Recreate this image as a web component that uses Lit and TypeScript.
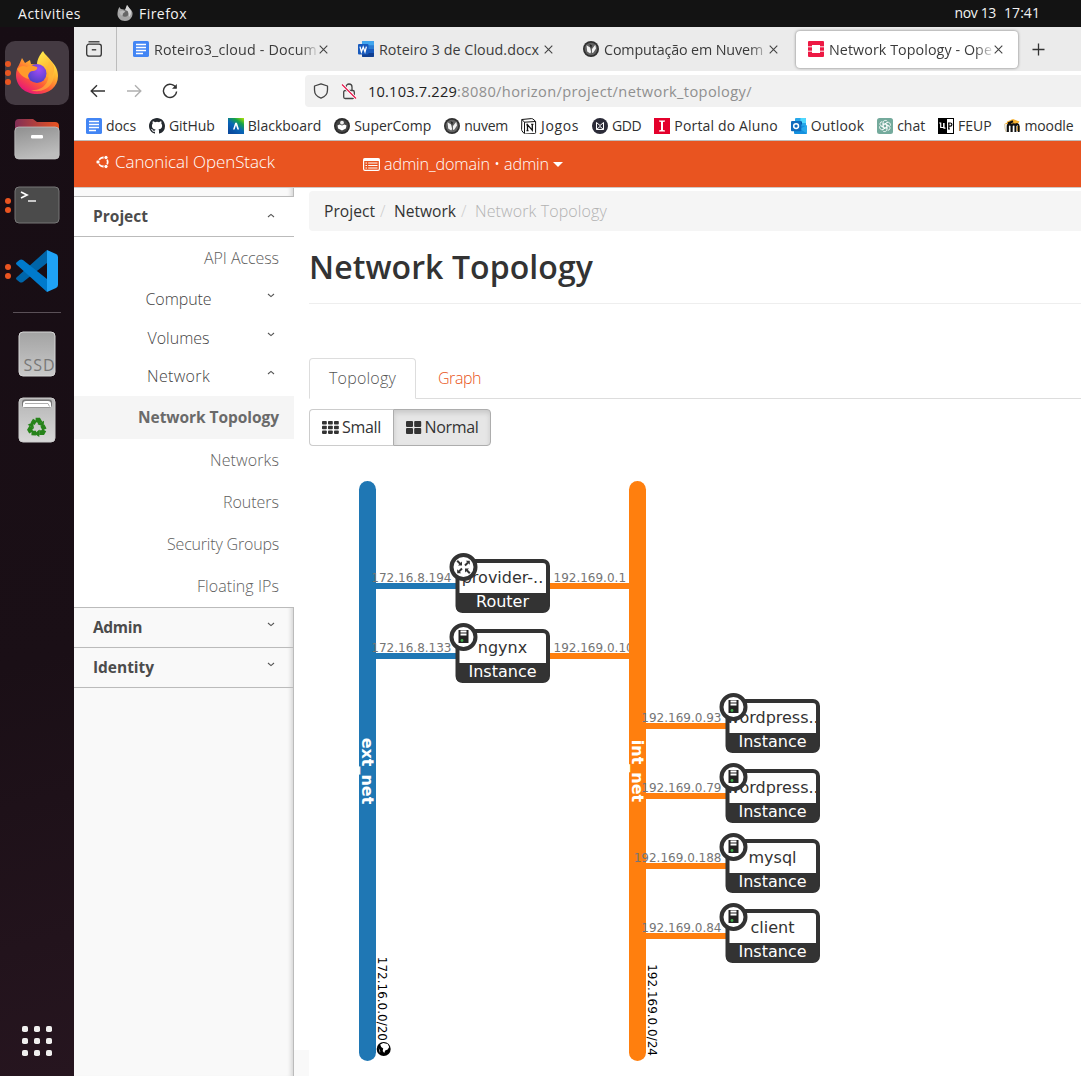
import { LitElement, html, svg, css, TemplateResult } from "lit";
import { customElement, property } from "lit/decorators.js";
import { classMap } from "lit/directives/class-map.js";

/** A single line of text whose tracking is adjusted so that it takes a given width. */
@customElement("fit-text")
class FitText extends LitElement {
  @property({ type: Number }) w = 0;
  @property() text = "";
  static styles = css`
    :host { display: inline-block; white-space: pre; flex: none; }
    .line { display: inline-block; white-space: pre; }
  `;
  render() {
    return html`<span class="line">${this.text}</span>`;
  }
  updated() {
    const line = this.renderRoot.querySelector(".line") as HTMLElement;
    line.style.letterSpacing = "0px";
    const natural = line.getBoundingClientRect().width;
    const n = Array.from(this.text).length;
    if (this.w && n) {
      line.style.letterSpacing = `${((this.w - natural) / n).toFixed(3)}px`;
      this.style.width = `${this.w}px`;
    }
  }
}

const t = (text: string, w: number, cls = "") => html`<fit-text class=${cls} .text=${text} .w=${w}></fit-text>`;

const ic = (body: TemplateResult, w = 16, h = 16, vb = `0 0 ${w} ${h}`) =>
  html`<svg class="ic" width=${w} height=${h} viewBox=${vb} fill="none">${body}</svg>`;

const ICONS: Record<string, TemplateResult> = {
  docs: svg`<rect width="16" height="16" rx="1.6" fill="#4285f4"/><path d="M3 4h10M3 7h10M3 10h10M3 13h7" stroke="#fff" stroke-width="1.5" transform="translate(0 -.5)"/>`,
  word: svg`<rect x="4" y="0" width="12" height="16" rx="1" fill="#2b7cd3"/><path d="M4 1a1 1 0 0 1 1-1h10a1 1 0 0 1 1 1v3.2H4z" fill="#41a5ee"/><path d="M4 8h12v4H4z" fill="#185abd"/><path d="M4 12h12v3a1 1 0 0 1-1 1H5a1 1 0 0 1-1-1z" fill="#103f91"/><rect y="3" width="10.5" height="10.5" rx="1" fill="#185abd"/><path d="M2 5.6l1.4 5.2L5.2 6l1.8 4.8L8.4 5.6" stroke="#fff" stroke-width="1.3"/>`,
  globe: svg`<circle cx="8" cy="8" r="8" fill="#303030"/><circle cx="8" cy="8" r="6.300" fill="#626262"/><path d="M3.500 4.200l3.600 2.300 1 4.500-.9 1.600-3-2zM9 8l3.300-4.300.7 3.800-2.600 4-1.400.6z" fill="#f2f2f2"/><path d="M6.500 3l2.500 1.500-1 3z" fill="#222"/>`,
  openstack: svg`<path d="M1 0h14a1 1 0 0 1 1 1v4h-4V4H4v1H0V1a1 1 0 0 1 1-1zM0 11h4v1h8v-1h4v4a1 1 0 0 1-1 1H1a1 1 0 0 1-1-1z" fill="#ed1944"/><path d="M0 6.300h4v3.400H0zM12 6.300h4v3.400h-4z" fill="#ed1944"/><path d="M0 5.600h4M12 5.600h4M0 10.400h4M12 10.400h4" stroke="#f7a3b3" stroke-width="1"/>`,
  github: svg`<path fill="#24292f" d="M8 0C3.580 0 0 3.580 0 8c0 3.540 2.290 6.530 5.470 7.590.4.070.55-.17.55-.38 0-.19-.01-.82-.01-1.490-2.010.37-2.530-.49-2.690-.94-.09-.23-.48-.94-.82-1.130-.28-.15-.68-.52-.01-.53.63-.01 1.080.58 1.230.82.72 1.210 1.870.87 2.330.66.07-.52.28-.87.51-1.070-1.780-.2-3.640-.89-3.640-3.950 0-.87.31-1.590.82-2.150-.08-.2-.36-1.020.08-2.120 0 0 .67-.21 2.200.82a7.600 7.600 0 0 1 4 0c1.530-1.040 2.200-.82 2.200-.82.44 1.100.16 1.920.08 2.120.51.56.82 1.270.82 2.150 0 3.070-1.870 3.750-3.650 3.950.29.25.54.73.54 1.480 0 1.070-.01 1.930-.01 2.200 0 .21.15.46.55.38A8.010 8.010 0 0 0 16 8c0-4.420-3.580-8-8-8z"/>`,
  blackboard: svg`<defs><linearGradient id="bb" x1="1" y1="0" x2=".3" y2="1"><stop stop-color="#b6e600"/><stop offset=".3" stop-color="#16a34a"/><stop offset=".6" stop-color="#0866b8"/><stop offset="1" stop-color="#0a4a9e"/></linearGradient></defs><rect width="16" height="16" fill="url(#bb)"/><path d="M5 11.500L7.200 4.800h1.700l2.200 6.700H9.400L8 7.300l-1.400 4.200z" fill="#fff"/>`,
  supercomp: svg`<circle cx="8" cy="8" r="8" fill="#2b2b2b"/><circle cx="8" cy="8" r="6.300" fill="#444"/><path d="M3.500 7.500l2-1 2.500 1 2.500-1 2 1-.6 3L8 12.500 4.100 10.500z" fill="#fff"/><circle cx="8" cy="4.700" r="1.900" fill="#eee"/>`,
  notion: svg`<path d="M.8 1.500l9.500-.9c.8 0 1.200.1 1.700.5l2 1.700c.5.4.6.5.6.9v10.800c0 .7-.2 1-1.100 1.100l-9 .4c-.7 0-1-.1-1.400-.5L1.100 13c-.3-.5-.5-.8-.5-1.300z" fill="#fff" stroke="#111" stroke-width="1"/><path d="M1 1.600l2.500 2.600 11-.7M3.500 4.200v11" stroke="#111" stroke-width="1"/><path d="M6.500 12.500V6.700l4.800 5.600V6.300M5.300 6.800h1.800M10.200 6.400h2.200M5.500 12.600h2" stroke="#111" stroke-width="1.300"/>`,
  gdd: svg`<circle cx="8" cy="8" r="8" fill="#2b2b38"/><path d="M4.500 4.500L8 7.500l3.500-3M4.500 11.500L8 8.500l3.500 3M4.500 4.500v7M11.500 4.500v7M4.500 11.500h7" stroke="#fff" stroke-width="1"/>`,
  insper: svg`<rect width="16" height="16" fill="#e4002b"/><path d="M5 2.600h6v1L9 4v8l2 .4v1H5v-1L7 12V4l-2-.4z" fill="#fff"/>`,
  outlook: svg`<rect x="4" y="0" width="11" height="9" rx="1" fill="#28a8ea"/><path d="M9.500 0H14a1 1 0 0 1 1 1v4H9.500z" fill="#50d9ff"/><path d="M3 7l13 1v7a1 1 0 0 1-1 1H4a1 1 0 0 1-1-1z" fill="#1490df"/><path d="M16 7v8.500L9 11z" fill="#28a8ea"/><path d="M4 3.500h7v3H4z" fill="#0358a7"/><rect y="3" width="10.300" height="10.300" rx="1" fill="#0f6cbd"/><circle cx="5.100" cy="8.100" r="2.400" stroke="#fff" stroke-width="1.500"/>`,
  chat: svg`<rect width="16" height="16" rx="2.500" fill="#74aa9c"/><g stroke="#fff" stroke-width=".8">${[0, 60, 120, 180, 240, 300].map(a => svg`<path transform=${`rotate(${a} 8 8)`} d="M6.100 9V4.600a2.300 2.300 0 0 1 4.300-1.100M6.100 6.900l3.800-2.200"/>`)}</g>`,
  feup: svg`<rect x=".5" y=".5" width="15" height="15" fill="#fff" stroke="#000"/><rect width="9" height="16" fill="#000"/><path d="M1.200 5h1.500v4.500h3V5M6 5v5.200h1.500" stroke="#fff" stroke-width="1.200"/><path d="M10.800 5v6M10 5h2.300a1.600 1.600 0 0 1 0 3.200h-1.500M10 11h2" stroke="#000" stroke-width="1.200"/>`,
  moodle: svg`<path d="M.5 6L9 1l6.500 2.500L13 7z" fill="#f9b332"/><path d="M.8 6c0 3 0 5 1.500 8" stroke="#d8c59a" stroke-width="1"/><path d="M12.800 8v5h2.800V8z" fill="#f9b332"/><path d="M3 3.500l5-2 1 3.500-5 2z" fill="#f9b332"/><path d="M3.800 14V8c0-2.300 3.800-2.300 3.800 0V14M7.600 14V8c0-2.300 4.200-2.300 4.200 0M4 5.500l5-2.200" stroke="#111" stroke-width="2.200"/><path d="M11.300 7.500c1-2.200 3.400-1.800 3.400.8V14M11.400 8v6" stroke="#111" stroke-width="1.900"/>`,
};

const BOOKMARKS: [string, string, number][] = [
  ["docs", "docs", 30], ["github", "GitHub", 46], ["blackboard", "Blackboard", 73.5], ["supercomp", "SuperComp", 77],
  ["globe", "nuvem", 44], ["notion", "Jogos", 38], ["gdd", "GDD", 29.5], ["insper", "Portal do Aluno", 103.5],
  ["outlook", "Outlook", 53.5], ["chat", "chat", 28], ["feup", "FEUP", 33.5], ["moodle", "moodle", 49],
];

const TABS: [string, string, number, boolean][] = [
  ["docs", "Roteiro3_cloud - Docum", 163, false],
  ["word", "Roteiro 3 de Cloud.docx", 160, false],
  ["globe", "Computação em Nuvem", 159, false],
  ["openstack", "Network Topology - Ope", 163, true],
];

/** Canvas with the networks as vertical bars and the attached devices between them. */
@customElement("topology-canvas")
class TopologyCanvas extends LitElement {
  static styles = css`
    :host { display: block; }
    svg { display: block; font-family: "DejaVu Sans", sans-serif; }
    .name { font-size: 16px; fill: #333; text-anchor: middle; }
    .kind { font-size: 16px; fill: #fff; text-anchor: middle; }
    .ip { font-size: 12px; fill: #757575; }
    .end { text-anchor: end; }
    .net { font-size: 16px; font-weight: bold; fill: #fff; text-anchor: middle; }
    .cidr { font-size: 12px; fill: #000; text-anchor: end; }
  `;

  device(x: number, y: number, name: string, kind: string, left: [string, string], right?: [string, string]) {
    const icon = kind === "Router"
      ? svg`<g>${[0, 90, 180, 270].map((a, i) => svg`<g transform=${`rotate(${a})`}><path d=${i % 2 ? "M2.800 -2.800L6.300 -6.300" : "M1.500 -1.500L4.500 -4.500"} fill="none" stroke="#333" stroke-width="2"/><path d=${i % 2 ? "M1.500 -1.500V-5.500L5.500 -1.500z" : "M6.300 -6.300V-2.300L2.300 -6.300z"} fill="#333"/></g>`)}</g>`
      : svg`<path d="M-5-7H5V6H-5z" fill="#222"/><path d="M-3-5.500H3M-3-2.500H3" stroke="#fff" stroke-width="1.800"/><circle cx="-1.500" cy="3.500" r="1.400" fill="#3fae49"/>`;
    return svg`<g transform=${`translate(${x} ${y})`}>
      <rect x="-80" y="24" width="81" height="6" fill=${left[1]} />
      <text class="ip end" x="-4" y="23">${left[0]}</text>
      ${right ? svg`<rect x="93" y="24" width="81" height="6" fill=${right[1]} /><text class="ip" x="98" y="23">${right[0]}</text>` : ""}
      <rect x="2" y="2" width="90.500" height="50" rx="5" fill="#fff" stroke="#333" stroke-width="4"/>
      <path d="M1 34H93V49q0 4-4 4H5q-4 0-4-4z" fill="#333"/>
      <svg x="3" width="88.500" height="34"><text class="name" x="44" y="24">${name}</text></svg>
      <text class="kind" x="47" y="48">${kind}</text>
      <g transform="translate(8 8)"><circle r="12" fill="#fff" stroke="#333" stroke-width="4"/>${icon}</g>
    </g>`;
  }

  network(x: number, color: string, name: string, cidr: string, end: number) {
    return svg`<rect x=${x} y="21" width="17" height="580" rx="8.500" fill=${color}/>
      <text class="net" transform=${`translate(${x + 3} 311) rotate(90)`}>${name}</text>
      <text class="cidr" transform=${`translate(${x + 19} ${end}) rotate(90)`}>${cidr}</text>`;
  }

  render() {
    const blue = "#1f77b4", orange = "#ff7f0e";
    return html`<svg width="772" height="616" viewBox="309 0 772 616">
      ${this.network(359, blue, "ext_net", "172.16.0.0/20", 581)}
      <g transform="translate(383.700 589)"><circle r="7" fill="#000"/><path d="M-3.500-4.500l3-1.500 4.500 1 1.500 3-1.500 2.500-2.500 1-1 2.500-1.500-2 .5-2.500-2-1.500zM-5-1l1.500 3-.2 2z" fill="#fff"/></g>
      ${this.device(455.5, 99, "provider-..", "Router", ["172.16.8.194", blue], ["192.169.0.1", orange])}
      ${this.device(455.5, 169, "ngynx", "Instance", ["172.16.8.133", blue], ["192.169.0.10", orange])}
      ${this.network(629, orange, "int_net", "192.169.0.0/24", 596)}
      ${this.device(725.5, 239, "wordpress..", "Instance", ["192.169.0.93", orange])}
      ${this.device(725.5, 309, "wordpress..", "Instance", ["192.169.0.79", orange])}
      ${this.device(725.5, 379, "mysql", "Instance", ["192.169.0.188", orange])}
      ${this.device(725.5, 449, "client", "Instance", ["192.169.0.84", orange])}
    </svg>`;
  }
}

@customElement("app-dock")
class AppDock extends LitElement {
  static styles = css`
    :host { display: block; width: 74px; background: linear-gradient(165deg, #170d14 0%, #1a0f16 60%, #26151f 100%); }
    .dock { height: 100%; box-sizing: border-box; padding: 13px 0 20px; display: flex; flex-direction: column; align-items: center; }
    .item { position: relative; width: 74px; height: 66px; display: flex; align-items: center; justify-content: center; flex: none; }
    .tile { width: 64px; height: 64px; border-radius: 10px; background: #443a42; display: flex; align-items: center; justify-content: center; }
    .run { position: absolute; left: 5px; top: 0; height: 66px; display: flex; flex-direction: column; justify-content: center; gap: 3px; }
    .run i { width: 6px; height: 6px; border-radius: 50%; background: #e95420; }
    .rule { width: 48px; height: 1px; background: #5a5057; margin: 8px 0; flex: none; }
    .grow { flex: 1; }
    svg { display: block; }
    .ssd { font: 16px "Open Sans", sans-serif; fill: #777; }
  `;
  item(icon: TemplateResult, run = 0, tile = false) {
    return html`<div class="item"><span class="run">${Array.from({ length: run }, () => html`<i></i>`)}</span>${tile ? html`<div class="tile">${icon}</div>` : icon}</div>`;
  }
  render() {
    const firefox = html`<svg width="44" height="44" viewBox="0 0 44 44"><defs>
      <linearGradient id="fa" x1=".85" y1=".1" x2=".25" y2="1"><stop stop-color="#fff44f"/><stop offset=".35" stop-color="#ffb02e"/><stop offset=".65" stop-color="#ff5b36"/><stop offset="1" stop-color="#e5107e"/></linearGradient>
      <radialGradient id="fb" cx=".6" cy=".3" r=".75"><stop stop-color="#a04bf5"/><stop offset="1" stop-color="#4b3fc4"/></radialGradient>
      <linearGradient id="fc" x1="0" y1="0" x2=".4" y2="1"><stop stop-color="#fff44f"/><stop offset="1" stop-color="#ffa52e"/></linearGradient></defs>
      <path d="M4 14L7 7l3 5 5-3 1 4 8 1 3-13 5 9 3-1c6 5 8 11 8 16 0 11-9 18-21 18S1 35 1 24c0-4 1-7 3-10z" fill="url(#fa)"/>
      <path d="M28 0c2 4 7 7 10 13 2 4 1 10-2 14l-6-2c1-5-3-9-8-11 0-6 3-10 6-14z" fill="url(#fc)"/>
      <path d="M34 10c6 6 7 16 2 23-4 6-13 9-20 6 12 1 20-8 17-20z" fill="#ffbd3a" opacity=".6"/>
      <circle cx="22" cy="22.500" r="9.500" fill="url(#fb)"/>
      <path d="M2 18c3-3 6-4 10-2 3-3 6-1 10 0 1 2-1 4-5 4-3 1-5 4-3 8-6-1-10-6-12-10z" fill="#ff9a2b"/></svg>`;
    const files = html`<svg width="46" height="42" viewBox="0 0 46 42"><defs><linearGradient id="ga" x2="1"><stop stop-color="#812e56"/><stop offset="1" stop-color="#e95420"/></linearGradient><linearGradient id="gb" x2=".3" y2="1"><stop stop-color="#8f8f8f"/><stop offset="1" stop-color="#bdbdbd"/></linearGradient></defs>
      <path d="M1 5q0-4 4-4h14l4 3h18q4 0 4 4v12H1z" fill="url(#ga)"/><rect x=".8" y="9" width="44.400" height="32" rx="4" fill="url(#gb)" stroke="#c8c8c8" stroke-width=".7"/><rect x="17" y="17" width="12" height="3.500" rx="1.200" fill="#fff"/></svg>`;
    const term = html`<svg width="46" height="38" viewBox="0 0 46 38"><rect x="1" y="1" width="44" height="36" rx="4" fill="#4b4b4b" stroke="#777"/><path d="M7 6l6 3L7 12" fill="none" stroke="#fff" stroke-width="1.700"/><path d="M14 15h8" stroke="#fff" stroke-width="1.400"/></svg>`;
    const code = html`<svg width="42" height="42" viewBox="0 0 42 42"><path d="M31 0L1 27q-2 1.500 0 3l2.500 2q1.500 1 3.500 0L31 13z" fill="#0065a9"/><path d="M31 42L1 15q-2-1.500 0-3l2.500-2q1.500-1 3.500 0l24 19z" fill="#007acc"/><path d="M31 0l9 4q2 1 2 3v28q0 2-2 3l-9 4z" fill="#1fa2f5"/></svg>`;
    const ssd = html`<svg width="38" height="46" viewBox="0 0 38 46"><defs><linearGradient id="sa" x2="0" y2="1"><stop stop-color="#a3a3a3"/><stop offset="1" stop-color="#c9c9c9"/></linearGradient></defs><rect x="1" y="1" width="36" height="44" rx="4" fill="url(#sa)" stroke="#d6d6d6"/><text class="ssd" x="5.500" y="39.500" textLength="31">SSD</text></svg>`;
    const trash = html`<svg width="38" height="46" viewBox="0 0 38 46"><defs><linearGradient id="ta" x2="0" y2="1"><stop stop-color="#b5b5b5"/><stop offset="1" stop-color="#d8d8d8"/></linearGradient></defs><rect x="1" y="1" width="36" height="44" rx="4" fill="url(#ta)" stroke="#ccc"/><rect x="4" y="2.500" width="30" height="8" rx="3" fill="#777"/><path d="M5 10V7q0-3 3-3h22q3 0 3 3v3z" fill="#fff"/><path d="M7 6.500h23l1.500 3" fill="none" stroke="#999" stroke-width=".8"/>
      <g fill="none" stroke="#26831a" stroke-width="4.600">${[0, 120, 240].map(a => svg`<g transform=${`rotate(${a} 19 30.500)`}><path d="M14.600 26.800l2.400-3.800"/><path d="M17.600 23h3l1.700 3"/><path d="M19.500 27.300l6.500-3.500-.3 6z" fill="#26831a" stroke="none"/></g>`)}</g></svg>`;
    const grid = html`<svg width="30" height="30" viewBox="0 0 30 30">${[0, 12, 24].map(y => [0, 12, 24].map(x => svg`<rect x=${x} y=${y} width="6" height="6" rx="1.800" fill="#f0efee"/>`))}</svg>`;
    return html`<div class="dock">${this.item(firefox, 3, true)}${this.item(files)}${this.item(term, 2)}${this.item(code, 2)}
      <div class="rule"></div>${this.item(ssd)}${this.item(trash)}<div class="grow"></div>${grid}</div>`;
  }
}

@customElement("app-root")
class AppRoot extends LitElement {
  static styles = css`
    :host { display: block; width: 1081px; height: 1076px; overflow: hidden; background: #fff; color: #333; font-family: "Open Sans", "Noto Sans", sans-serif; font-size: 16px; line-height: 1; }
    * { box-sizing: border-box; }
    svg { display: block; flex: none; }
    .top { height: 27px; background: #131313; color: #f2f2f2; font-size: 14px; display: flex; align-items: center; padding: 0 41px 0 18px; }
    .top .ffi { margin: 0 6px 2px 36px; }
    .top .clock { margin-left: auto; display: flex; gap: 8px; padding-bottom: 2px; }
    .body { display: flex; height: 1049px; }
    .browser { flex: 1; min-width: 0; display: flex; flex-direction: column; }

    .tabs { height: 44px; background: #ebebeb; display: flex; align-items: center; font-size: 14.3px; color: #3b3b3b; flex: none; }
    .recent { width: 43px; height: 44px; border-right: 1px solid #bcbcbc; display: flex; align-items: center; padding-left: 12px; margin-right: 4px; }
    .tab { width: 225px; height: 37px; display: flex; align-items: center; padding-left: 12px; flex: none; gap: 5px; }
    .tab.on { width: 222px; background: #fff; border-radius: 4px; box-shadow: 0 0 3px rgba(0,0,0,.5); }
    .title { width: 164px; -webkit-mask-image: linear-gradient(90deg, #000 146px, rgba(0,0,0,.15) 163px); mask-image: linear-gradient(90deg, #000 146px, rgba(0,0,0,.15) 163px); height: 24px; padding-top: 2px; display: flex; align-items: center; line-height: 22px; }
    .title.whole { -webkit-mask-image: none; mask-image: none; }
    .x { margin-left: -4px; }
    .plus { margin-left: 14px; }

    .nav { height: 40px; display: flex; align-items: center; padding-left: 16px; font-size: 14.6px; flex: none; }
    .nav .back { margin-right: 20px; } .nav .fwd { margin-right: 20px; } .nav .re { margin-right: 127px; }
    .url { flex: 1; height: 32px; background: #f1f1f1; border-radius: 4px 0 0 4px; display: flex; align-items: center; padding-left: 8px; line-height: 24px; }
    .url .lock { margin: 0 11px 0 12px; }
    .host { color: #222; } .path { color: #8f8f8f; }
    .marks { height: 29px; display: flex; align-items: center; padding-left: 12px; gap: 13px; font-size: 14px; color: #303030; flex: none; line-height: 20px; }
    .mark { display: flex; align-items: center; gap: 4px; flex: none; margin-right: -.1px; }

    .head { height: 48px; background: #e95420; border-top: 1px solid #c0bcba; border-bottom: 1px solid #cfc8c5; color: #fff; display: flex; align-items: center; padding-left: 22px; font-weight: 300; flex: none; line-height: 24px; }
    .head .brand { display: flex; align-items: center; gap: 5px; padding-bottom: 4px; margin-right: 88px; }
    .head .brand svg { margin-bottom: 1px; }
    .head .proj { display: flex; align-items: center; gap: 4px; }
    .brand { font-size: 17px; } .proj { font-size: 16.2px; }

    .app { display: flex; flex: 1; min-height: 0; }
    .side { width: 220px; display: flex; flex-direction: column; color: #606060; background: #fff; flex: none; line-height: 24px; }
    .strip { height: 9px; border-bottom: 1px solid #bbb; background: #f9f9f9; }
    .shade { border-right: 1px solid #bbb; box-shadow: inset -5px 0 4px -3px rgba(0,0,0,.14); background-color: #f9f9f9; }
    .group { height: 40px; border-bottom: 1px solid #bbb; display: flex; align-items: center; justify-content: space-between; padding: 0 19px; font-weight: 700; font-size: 15.5px; color: #4c4c4c; flex: none; }
    .group svg { margin-bottom: 3px; }
    .group.open { padding-bottom: 2px; }
    .group.open svg { margin-bottom: 1px; }
    .group.shade { padding-right: 18px; }
    .group.shade svg { margin-bottom: 5px; }
    .leaf { height: 42px; display: flex; align-items: center; justify-content: flex-end; padding-right: 15px; font-weight: 300; flex: none; }
    .leaf.on { background: #f5f5f5; font-weight: 700; height: 43px; color: #6a6a6a; font-size: 15.500px; }
    .api { padding-bottom: 0; height: 43px; }
    .api .leaf { height: 42px; }
    .sub { height: 38.600px; display: grid; grid-template-columns: 209px 11px; align-items: center; font-weight: 300; color: #444; flex: none; }
    .sub fit-text { justify-self: center; }
    .sub svg { margin: 0 0 7px -16px; }
    .end { border-bottom: 1px solid #bbb; flex: none; }
    .fill { flex: 1; }

    .main { flex: 1; min-width: 0; display: flex; flex-direction: column; padding: 3px 0 0 15px; line-height: 24px; position: relative; }
    .crumbs { height: 40px; background: #f5f5f5; border-radius: 4px 0 0 4px; display: flex; align-items: center; padding-left: 15px; flex: none; }
    .crumbs .sep { color: #ccc; margin: 0 8px 0 5px; font-weight: 300; width: 6px; }
    .crumbs .cur { color: #b2b2b2; font-weight: 300; }
    .crumbs .lnk { color: #333; font-size: 15.600px; }
    .h1 { height: 73px; border-bottom: 1px solid #eee; display: flex; align-items: center; font-size: 32px; font-weight: 600; color: #333; line-height: 44px; flex: none; }
    .views { height: 41px; margin-top: 54px; display: flex; border-bottom: 1px solid #ddd; font-weight: 300; flex: none; }
    .view { height: 41px; display: flex; align-items: center; justify-content: center; width: 107px; color: #555; padding-bottom: 2px; }
    .view.on { border: 1px solid #ddd; border-bottom-color: #fff; border-radius: 4px 4px 0 0; }
    .view.link { width: 87px; color: #e95420; }
    .sizes { display: flex; margin-top: 10px; height: 37px; flex: none; color: #333; }
    .size { display: flex; align-items: center; justify-content: center; gap: 3px; width: 84px; border: 1px solid #ccc; border-radius: 4px 0 0 4px; border-right: 0; padding-bottom: 2px; }
    .size svg { margin-top: 1px; }
    .size.on { width: 98px; border: 1px solid #adadad; border-radius: 0 4px 4px 0; background: #e6e6e6; box-shadow: inset 0 3px 5px rgba(0,0,0,.125); }
    .canvas { margin-top: 14px; height: 616px; }
    .patch { position: absolute; left: 0; bottom: 0; width: 15px; height: 26px; background: #f9f9f9; }
  `;

  chevron(up: boolean) {
    return html`<svg width="8" height="5" viewBox="0 0 8 5" fill="none"><path d=${up ? "M1 4l3-2.600L7 4" : "M1 1l3 2.600L7 1"} stroke="#555" stroke-width="1.100"/></svg>`;
  }
  leaf(label: string, w: number, on = false) {
    return html`<div class=${classMap({ leaf: true, on })}>${t(label, w)}</div>`;
  }
  sub(label: string, w: number, up = false) {
    return html`<div class="sub">${t(label, w)}${this.chevron(up)}</div>`;
  }

  render() {
    return html`
      <div class="top">${t("Activities", 63)}
        <svg class="ffi" width="16" height="16" viewBox="0 0 16 16"><path d="M1 5l1.300-3 1.500 2L9 5l1-5 2.500 3.500C16 6 16 9 15 11.500c-1.500 3-4 4.500-7 4.500-4.500 0-8-3.500-7.500-8z" fill="#a5a5a5"/><path d="M10 0l3 4c2 3 1 6-1 8 0-4-2-6-4-7z" fill="#d5d5d5"/><circle cx="8" cy="8.500" r="3.300" fill="#666"/><path d="M1 7l5-1.500 2.500 1L6 8.500 5.500 11C3.500 10 3 9 3 7.500z" fill="#bbb"/></svg>
        ${t("Firefox", 48)}<span class="clock">${t("nov 13", 41.500)}${t("17:41", 36)}</span></div>
      <div class="body">
        <app-dock></app-dock>
        <div class="browser">
          <div class="tabs">
            <div class="recent"><svg width="16" height="16" viewBox="0 0 16 16" fill="none" stroke="#333" stroke-width="1.300"><path d="M2.500.8h11"/><rect x=".7" y="3.200" width="14.600" height="12" rx="2.200"/><path d="M5.800 8.800h4.400"/></svg></div>
            ${TABS.map(([i, label, w, on]) => html`<div class=${classMap({ tab: true, on })}>${ic(ICONS[i])}<span class=${classMap({ title: true, whole: i === "word" })}>${t(label, w)}</span><svg class="x" width="9" height="9" viewBox="0 0 9 9"><path d="M.7.700l7.600 7.600M8.300.700L.7 8.300" stroke="#444" stroke-width="1.100"/></svg></div>`)}
            <svg class="plus" width="13" height="13" viewBox="0 0 13 13"><path d="M6.500.500v12M.5 6.500h12" stroke="#333" stroke-width="1.300"/></svg>
          </div>
          <div class="nav">
            <svg class="back" width="16" height="14" viewBox="0 0 16 14" fill="none" stroke="#333" stroke-width="1.400"><path d="M7 1.200L1.200 7 7 12.800M1.200 7H15"/></svg>
            <svg class="fwd" width="16" height="14" viewBox="0 0 16 14" fill="none" stroke="#b0b0b0" stroke-width="1.400"><path d="M9 1.200L14.800 7 9 12.800M14.800 7H1"/></svg>
            <svg class="re" width="16" height="16" viewBox="0 0 16 16" fill="none" stroke="#333" stroke-width="1.400"><path d="M14 5A6.600 6.600 0 1 0 14.600 8.500"/><path d="M14.800 1v4.800H10z" fill="#333" stroke="none"/></svg>
            <div class="url">
              <svg width="16" height="16" viewBox="0 0 16 16" fill="none" stroke="#444" stroke-width="1.300"><path d="M8 .8l6.500 2.200v4c0 4-3 7-6.500 8.200C4.500 14 1.500 11 1.500 7V3z" stroke-linejoin="round"/></svg>
              <svg class="lock" width="16" height="17" viewBox="0 0 16 17" fill="none" stroke="#444" stroke-width="1.300"><path d="M5 7.500V4a3 3 0 0 1 6 0v3.500"/><rect x="2.700" y="7.500" width="10.600" height="8" rx="1.500"/><path d="M1 1.500l14 14" stroke="#fff" stroke-width="3"/><path d="M1 1.500l14 14" stroke="#e8174c"/></svg>
              ${t("10.103.7.229", 89, "host")}${t(":8080/horizon/project/network_topology/", 295, "path")}
            </div>
          </div>
          <div class="marks">${BOOKMARKS.map(([i, label, w]) => html`<span class="mark">${ic(ICONS[i])}${t(label, w)}</span>`)}</div>
          <div class="head">
            <span class="brand"><svg width="14" height="14" viewBox="0 0 14 14" fill="none"><circle cx="7.200" cy="7" r="4.500" stroke="#fff" stroke-width="1.800"/><g fill="#fff" stroke="#e95420" stroke-width=".9"><circle cx="2" cy="7" r="2.100"/><circle cx="10" cy="2.500" r="2.100"/><circle cx="10" cy="11.500" r="2.100"/></g></svg>${t("Canonical OpenStack", 160)}</span>
            <span class="proj"><svg width="17" height="13" viewBox="0 0 17 13" fill="none"><rect x=".6" y=".6" width="15.800" height="11.800" rx="1.400" stroke="#fff" stroke-width="1.200"/><path d="M.6 1.800h15.800" stroke="#fff" stroke-width="2.400"/><path d="M2.500 5h1.500M5.200 5h9.300M2.500 7.500h1.500M5.200 7.500h9.300M2.500 10h1.500M5.200 10h9.300" stroke="#fff" stroke-width="1.100"/></svg>${t("admin_domain • admin", 165)}<svg width="10" height="5" viewBox="0 0 10 5"><path d="M0 0h10L5 5z" fill="#fff"/></svg></span>
          </div>
          <div class="app">
            <div class="side">
              <div class="strip shade"></div>
              <div class="group open">${t("Project", 55)}${this.chevron(true)}</div>
              <div class="api">${this.leaf("API Access", 75)}</div>
              ${this.sub("Compute", 66)}${this.sub("Volumes", 62)}${this.sub("Network", 63, true)}
              ${this.leaf("Network Topology", 141, true)}
              ${this.leaf("Networks", 69)}${this.leaf("Routers", 56)}${this.leaf("Security Groups", 112)}
              <div class="end">${this.leaf("Floating IPs", 82)}</div>
              <div class="group shade">${t("Admin", 49)}${this.chevron(false)}</div>
              <div class="group shade">${t("Identity", 61)}${this.chevron(false)}</div>
              <div class="fill shade"></div>
            </div>
            <div class="main">
              <div class="crumbs">${t("Project", 51, "lnk")}<span class="sep">/</span>${t("Network", 62, "lnk")}<span class="sep">/</span>${t("Network Topology", 132, "cur")}</div>
              <div class="h1">${t("Network Topology", 284)}</div>
              <div class="views"><div class="view on">${t("Topology", 67)}</div><div class="view link">${t("Graph", 43)}</div></div>
              <div class="sizes">
                <div class="size"><svg width="17" height="13" viewBox="0 0 17 13" fill="#333">${[0, 6, 12].map(x => [0, 4.700, 9.400].map(y => svg`<rect x=${x} y=${y} width="4.800" height="3.500" rx=".8"/>`))}</svg>${t("Small", 39)}</div>
                <div class="size on"><svg width="16" height="13" viewBox="0 0 16 13" fill="#333">${[0, 8.200].map(x => [0, 7].map(y => svg`<rect x=${x} y=${y} width="7" height="6" rx="1"/>`))}</svg>${t("Normal", 54)}</div>
              </div>
              <div class="canvas"><topology-canvas></topology-canvas></div>
              <div class="patch"></div>
            </div>
          </div>
        </div>
      </div>`;
  }
}
